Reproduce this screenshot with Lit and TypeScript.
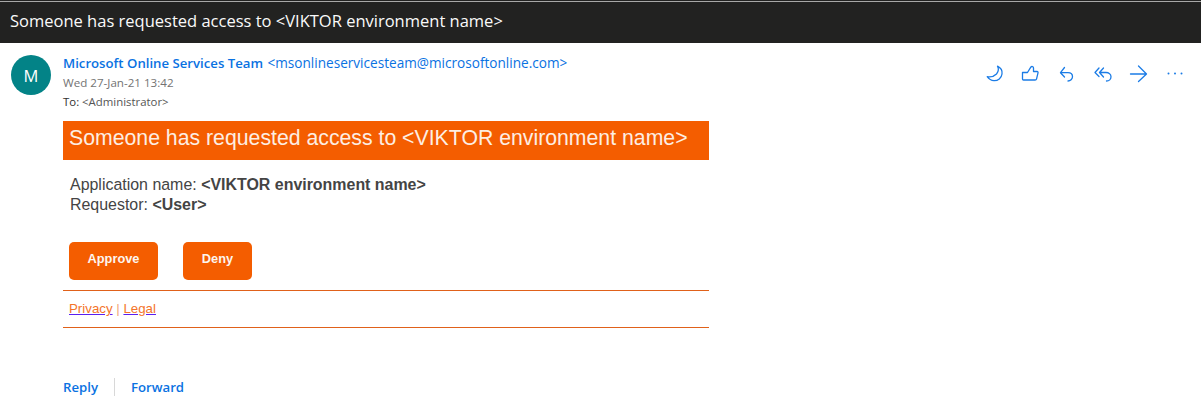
import { LitElement, html, css } from "lit";
import { customElement } from "lit/decorators.js";

@customElement("app-root")
export class AppRoot extends LitElement {
  static styles = css`
    :host { display: block; width: 1201px; height: 412px; background: #fff; overflow: hidden; font-family: "Open Sans", "Noto Sans", sans-serif; }
    .top { height: 43px; box-sizing: border-box; padding: 1px 0 0 10px; background: #222221; color: #fafafa; font-size: 16.5px; font-weight: 500; line-height: 38px; white-space: nowrap; }
    .top::before { content: ""; display: block; height: 1px; margin-left: -10px; background: #a8a8a8; }
    .head { display: flex; padding: 12px 0 0 11px; height: 66px; }
    .avatar { width: 40px; height: 40px; border-radius: 50%; background: #038387; color: #fff; font-size: 16.5px; display: flex; align-items: center; justify-content: center; flex: none; margin-right: 12px; }
    .meta { flex: 1; }
    .from { color: #0a72e2; font-size: 13.2px; font-weight: 600; line-height: 16px; white-space: nowrap; }
    .from span { font-size: 13.6px; font-weight: 500; margin-left: 1px; }
    .date { color: #737373; font-size: 11.6px; line-height: 16px; margin-top: 4px; }
    .to { color: #323130; font-size: 11.4px; line-height: 16px; margin-top: 3px; }
    .to span { color: #555; }
    .acts { display: flex; gap: 16.5px; padding: 9px 16px 0 0; height: 22px; }
    .acts svg { width: 20px; height: 20px; overflow: visible; fill: none; stroke: #1b7ce6; stroke-width: 1.3; stroke-linecap: round; stroke-linejoin: round; }
    .acts svg.dots { margin-left: 1px; fill: #1b7ce6; stroke: none; }
    .mail { margin-left: 63px; width: 646px; font-family: "Liberation Sans", Arial, sans-serif; }
    .banner { background: #f45d00; color: #fdeee3; height: 39px; line-height: 35px; font-size: 21.26px; padding-left: 6px; white-space: nowrap; }
    .fields { padding: 15px 0 0 7px; color: #444; font-size: 15.95px; line-height: 20px; }
    .btns { display: flex; gap: 25px; margin: 27px 0 0 6px; }
    .btn { background: #f45d00; color: #fdf5ef; font-size: 12.8px; font-weight: 700; height: 38px; line-height: 33px; border-radius: 5px; text-align: center; }
    .approve { width: 89px; }
    .deny { width: 69px; }
    .links { margin-top: 10px; height: 36px; border-top: 1px solid #e0611a; border-bottom: 1px solid #e0611a; padding-left: 6px; font-size: 13.3px; line-height: 35px; color: #f2a878; }
    .links a { color: #f4742a; text-decoration-line: underline; text-decoration-color: #5a1ff0; }
    .foot { display: flex; align-items: center; margin: 50px 0 0 63px; color: #0a72e2; font-size: 13.2px; font-weight: 600; line-height: 18px; }
    .sep { width: 1px; height: 18px; background: #d8d8d8; margin: 0 16px; }
  `;

  render() {
    return html`
      <div class="top">Someone has requested access to &lt;VIKTOR environment name&gt;</div>
      <div class="head">
        <div class="avatar">M</div>
        <div class="meta">
          <div class="from">Microsoft Online Services Team <span>&lt;msonlineservicesteam@microsoftonline.com&gt;</span></div>
          <div class="date">Wed 27-Jan-21 13:42</div>
          <div class="to">To: <span>&lt;Administrator&gt;</span></div>
        </div>
        <div class="acts">
          <svg viewBox="0 0 20 20"><path d="M15.500 2.200C19 4 20.500 7 20 10C19.500 14 16 16.800 12 16.700C9.500 16.600 6.800 15 5.200 12.700C8 13.200 12 12.500 14.500 10C16.500 7.500 16.800 4.500 15.500 2.200z"/></svg>
          <svg viewBox="0 0 20 20"><path d="M4.500 8.500H9.500L12.800 3.200c.8-1.100 2.800-.8 2.700.7V7.500H19c.8 0 1.200.6 1 1.400l-1.500 6.200c-.2.700-.7.900-1.400.9H5.500c-.6 0-1-.4-1-1z"/></svg>
          <svg viewBox="0 0 20 20"><path d="M9.500 3.500 5.500 8.700l4 4.300M5.500 8.700H13c2.800 0 4.500 1.700 4.500 4S15.300 17 13 17"/></svg>
          <svg viewBox="0 0 20 20"><path d="M8 4 4 8.500l4 4M12.500 4 8.500 8.500l4 4.500M8.500 8.500h6.500c2.800 0 5 1.800 5 4.200S18 17 15.500 17"/></svg>
          <svg viewBox="0 0 20 20"><path d="M2.500 10h16M10.500 2l8 8-8 7.500"/></svg>
          <svg class="dots" viewBox="0 0 20 20"><circle cx="3.500" cy="9.500" r="1"/><circle cx="10" cy="9.500" r="1"/><circle cx="16.500" cy="9.500" r="1"/></svg>
        </div>
      </div>
      <div class="mail">
        <div class="banner">Someone has requested access to &lt;VIKTOR environment name&gt;</div>
        <div class="fields">
          Application name: <b>&lt;VIKTOR environment name&gt;</b><br />
          Requestor: <b>&lt;User&gt;</b>
        </div>
        <div class="btns"><div class="btn approve">Approve</div><div class="btn deny">Deny</div></div>
        <div class="links"><a>Privacy</a> | <a>Legal</a></div>
      </div>
      <div class="foot"><span>Reply</span><div class="sep"></div><span>Forward</span></div>
    `;
  }
}
